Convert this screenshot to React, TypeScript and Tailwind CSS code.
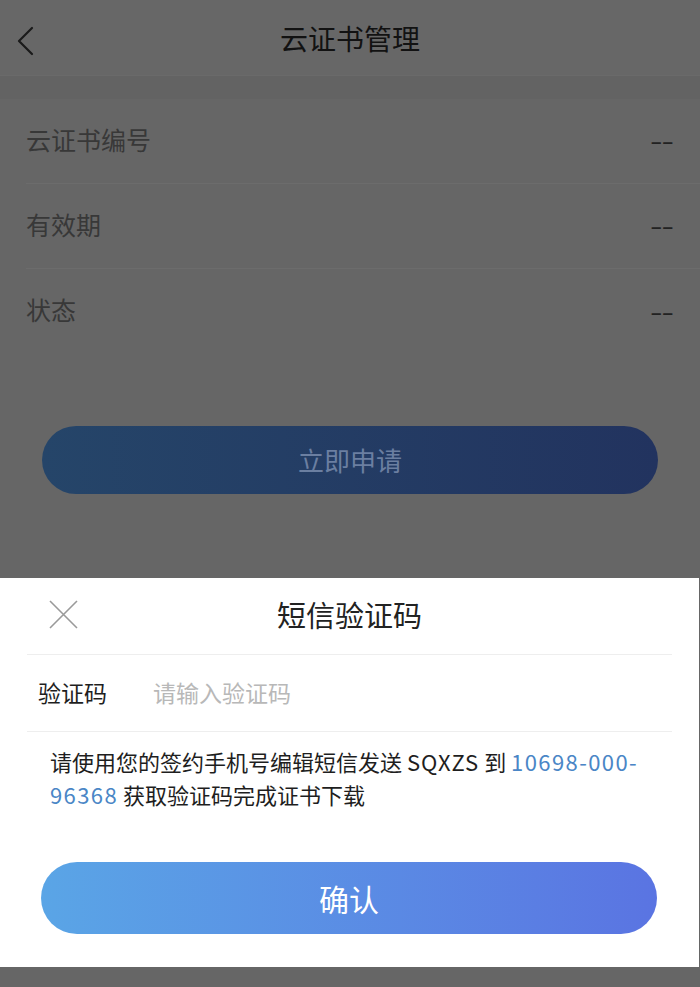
import React from "react";

const rows = [
  { label: "云证书编号", value: "--" },
  { label: "有效期", value: "--" },
  { label: "状态", value: "--" },
];

export default function App() {
  return (
    <div
      className="w-[700px] h-[987px] overflow-hidden bg-[#666666] flex flex-col"
      style={{ fontFamily: '"Noto Sans CJK SC", "Noto Sans", sans-serif' }}
    >
      {/* Header */}
      <div className="relative h-[76px] shrink-0 bg-[#676767] flex items-center justify-center border-b border-[#6a6a6a]">
        <svg
          className="absolute left-[15px] top-[26px]"
          width="20"
          height="30"
          viewBox="0 0 20 30"
          fill="none"
        >
          <path d="M17 2 L4 15 L17 28" stroke="#1a1a1a" strokeWidth="2.2" strokeLinecap="round" strokeLinejoin="round" />
        </svg>
        <span className="text-[28px] text-[#121212] leading-none">云证书管理</span>
      </div>

      {/* Gap band */}
      <div className="h-[23px] shrink-0 bg-[#636363]" />

      {/* Info rows */}
      <div className="flex flex-col">
        {rows.map((r, i) => (
          <div
            key={r.label}
            className={
              "h-[85px] ml-[26px] pr-[27px] pb-[4px] flex items-center justify-between " +
              (i < rows.length - 1 ? "border-b border-[#6c6c6c]" : "")
            }
          >
            <span className="text-[25px] text-[#383838] leading-none">{r.label}</span>
            <span className="text-[36px] text-[#222222] leading-none tracking-[-1px] scale-y-75">{r.value}</span>
          </div>
        ))}
      </div>

      {/* Apply button */}
      <div className="mt-[72px] mx-[42px] h-[68px] rounded-full bg-gradient-to-r from-[#254569] to-[#22335f] flex items-center justify-center">
        <span className="text-[26px] text-[#6b7fa1] leading-none">立即申请</span>
      </div>

      {/* SMS sheet */}
      <div className="mt-[84px] w-[699px] h-[389px] shrink-0 bg-white flex flex-col">
        <div className="relative h-[76px] pb-[3px] flex items-center justify-center">
          <svg
            className="absolute left-[49px] top-[22px]"
            width="29"
            height="29"
            viewBox="0 0 29 29"
            fill="none"
          >
            <path d="M1 1 L28 28 M28 1 L1 28" stroke="#9a9a9a" strokeWidth="1.6" />
          </svg>
          <span className="text-[29px] text-[#222222] leading-none">短信验证码</span>
        </div>
        <div className="mx-[27px] border-t border-[#eeeeee]" />
        <div className="h-[77px] mx-[27px] pb-[2px] border-b border-[#eeeeee] flex items-center">
          <span className="ml-[11px] w-[115px] text-[23px] text-[#1e1e1e] leading-none">验证码</span>
          <span className="text-[23px] text-[#b8b8b8] leading-none">请输入验证码</span>
        </div>
        <div className="pl-[50px] pt-[13px] text-[22px] leading-[33px] text-[#1e1e1e]">
          <div className="whitespace-nowrap">
            请使用您的签约手机号编辑短信发送 <span className="tracking-[1px]">SQXZS</span> 到{" "}
            <span className="text-[#4a86c6] tracking-[1.4px]">10698-000-</span>
          </div>
          <div className="whitespace-nowrap">
            <span className="text-[#4a86c6] tracking-[1.4px]">96368</span> 获取验证码完成证书下载
          </div>
        </div>
        <div className="mt-[51px] ml-[41px] w-[616px] h-[72px] rounded-full bg-gradient-to-r from-[#5aa5e6] to-[#5a74e2] flex items-center justify-center">
          <span className="text-[30px] text-white leading-none">确认</span>
        </div>
      </div>
    </div>
  );
}
